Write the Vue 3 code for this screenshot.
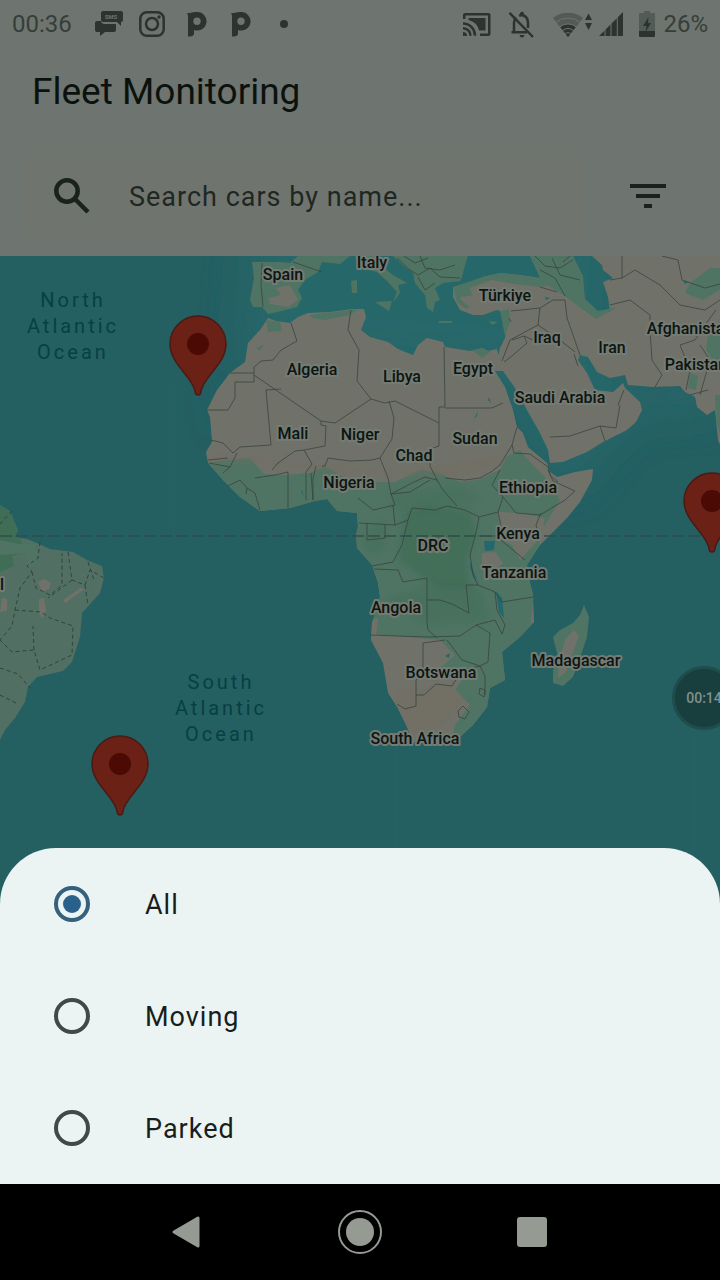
<script setup>
import { ref } from 'vue'

const query = ref('')
const filter = ref('All')
const options = ['All', 'Moving', 'Parked']

const countries = [
  { name: 'Spain', x: 283, y: 280 },
  { name: 'Italy', x: 372, y: 268 },
  { name: 'Türkiye', x: 505, y: 301 },
  { name: 'Iraq', x: 547, y: 343 },
  { name: 'Iran', x: 612, y: 353 },
  { name: 'Afghanistan', x: 690, y: 334 },
  { name: 'Pakistan', x: 696, y: 370 },
  { name: 'Algeria', x: 312, y: 375 },
  { name: 'Libya', x: 402, y: 382 },
  { name: 'Egypt', x: 473, y: 374 },
  { name: 'Saudi Arabia', x: 560, y: 403 },
  { name: 'Mali', x: 293, y: 439 },
  { name: 'Niger', x: 360, y: 440 },
  { name: 'Chad', x: 414, y: 461 },
  { name: 'Sudan', x: 475, y: 444 },
  { name: 'Nigeria', x: 349, y: 488 },
  { name: 'Ethiopia', x: 528, y: 493 },
  { name: 'DRC', x: 433, y: 551 },
  { name: 'Kenya', x: 518, y: 539 },
  { name: 'Tanzania', x: 514, y: 578 },
  { name: 'Angola', x: 396, y: 613 },
  { name: 'Botswana', x: 441, y: 678 },
  { name: 'Madagascar', x: 576, y: 666 },
  { name: 'South Africa', x: 415, y: 744 },
  { name: 'Brazil', x: -16, y: 590 },
]

const oceans = [
  { words: ['North', 'Atlantic', 'Ocean'], x: 73, y: 307 },
  { words: ['South', 'Atlantic', 'Ocean'], x: 221, y: 689 },
]

const pins = [
  { id: 'a', x: 198, y: 344 },
  { id: 'b', x: 712, y: 501 },
  { id: 'c', x: 120, y: 764 },
]
</script>

<template>
  <div class="screen">
    <header class="top">
      <div class="status">
        <span class="clock">00:36</span>
        <svg class="st-icon sms" width="28" height="26" viewBox="0 0 28 26">
          <path d="M8 0h18q2 0 2 2v7q0 2-2 2v4l-4-4H8q-2 0-2-2V2q0-2 2-2z" />
          <path d="M2 10h4q0 3 4 3h11v6q0 2-2 2h-9l-5 4v-4H2q-2 0-2-2v-7q0-2 2-2z" />
          <text x="16" y="8" text-anchor="middle">SMS</text>
        </svg>
        <svg class="st-icon insta" width="26" height="26" viewBox="0 0 26 26">
          <rect x="1.3" y="1.3" width="23.4" height="23.4" rx="6.5" />
          <circle cx="13" cy="13" r="6" />
          <circle class="dot" cx="20" cy="6" r="1.7" />
        </svg>
        <svg v-for="n in 2" :key="n" class="st-icon pee" width="20" height="25" viewBox="0 0 20 25">
          <path fill-rule="evenodd" d="M0 1h3Q6 0 9.500 0A9.300 9.300 0 1 1 7 18v3.500Q7 25 1 24.500V5Q1 2 0 1zM10 5.500a3.700 3.700 0 1 0 0 7.400a3.700 3.700 0 1 0 0-7.400z" />
        </svg>
        <span class="more"></span>
        <span class="grow"></span>
        <svg class="st-icon" width="28" height="23" viewBox="0 0 28 23">
          <path d="M0 6V2q0-2 2-2h23.500q2 0 2 2v19q0 2-2 2H17v-2.500h8V2.500H2.500V6z" />
          <path d="M5.500 5H22.500v12.500H16A14 14 0 0 0 5.500 7z" />
          <path class="arc" d="M0 10.500A12 12 0 0 1 12 22.800M0 15.300A7.400 7.400 0 0 1 7.500 22.800" />
          <path d="M0 19a4 4 0 0 1 4 4H0z" />
        </svg>
        <svg class="st-icon bell" width="26" height="27" viewBox="0 0 26 27">
          <path class="line" d="M6 21V12q0-3.500 2-5.500M11 4.500q8-1.500 9 6.500v6M3.500 21.300H19" />
          <path d="M12 3V2q2-2.500 4 0v2h-4zM11.500 24h5q-.5 2.500-2.500 2.500T11.500 24z" />
          <path class="line" d="M1.500 1.800L25 26" />
        </svg>
        <svg class="st-icon wifi" width="39" height="25" viewBox="0 0 39 25">
          <path class="faint" d="M0 6A24 24 0 0 1 30 6L15 25z" />
          <path d="M7 14.800A13 13 0 0 1 23 14.800L15 25z" />
          <path class="gap" d="M3 10.500A18.500 18.500 0 0 1 27 10.500M6.500 15A13.300 13.300 0 0 1 23.500 15M9.500 18.700A8 8 0 0 1 20.500 18.700M12 22A4 4 0 0 1 18 22" />
          <path d="M32 8l3.500-6.500L39 8zM32 11h7l-3.500 7z" />
        </svg>
        <svg class="st-icon signal" width="24" height="24" viewBox="0 0 24 24">
          <path d="M0 24L5.500 18.500V24zM6.500 24v-6.500L11.500 12.500V24zM12.500 24V11.500L17.800 6.200V24zM18.800 24V5.200L24 0v24z" />
        </svg>
        <svg class="st-icon batt" width="16" height="26" viewBox="0 0 16 26">
          <path class="faint" d="M5 0h6v2h4q1 0 1 1v17H0V3q0-1 1-1h4z" />
          <path d="M0 20h16v5q0 1-1 1H1q-1 0-1-1z" />
          <path d="M9.500 6L4 15h3.500l-1 6L12 12H9z" />
        </svg>
        <span class="percent">26%</span>
      </div>
      <h1>Fleet Monitoring</h1>
      <div class="tools">
        <label class="search">
          <svg width="36" height="36" viewBox="0 0 36 36" aria-hidden="true">
            <circle cx="13" cy="13" r="10.700" />
            <path d="M21 21L34 34" />
          </svg>
          <input v-model="query" type="text" placeholder="Search cars by name..." aria-label="Search cars by name" />
        </label>
        <button class="filter" type="button" aria-label="Filter cars">
          <svg width="36" height="24" viewBox="0 0 36 24">
            <path d="M0 0h36v4H0zM6 10h24v4H6zM14 20h8v4h-8z" />
          </svg>
        </button>
      </div>
    </header>

    <main class="stage">
      <svg class="map" viewBox="0 256 720 928" preserveAspectRatio="xMidYMin slice" role="img" aria-label="Fleet map">
        <defs>
          <filter id="shelf" x="-30%" y="-60%" width="160%" height="220%">
            <feGaussianBlur stdDeviation="22" />
          </filter>
          <filter id="mottle" x="-10%" y="-10%" width="120%" height="120%">
            <feGaussianBlur stdDeviation="3" />
          </filter>
          <clipPath id="africa">
            <path id="africa-shape" d="M268 318L276 321L290 323L298 317L308 313L330 312L352 309L364 309L366 317L361 330L370 337L388 342L398 349L413 355L418 345L427 338L443 342L445 347L470 351L482 348L488 351L497 349L500 360L495 371L505 387L513 410L517 427L523 433L528 447L547 463L550 472L557 477L575 472L593 469L592 480L580 502L567 518L553 532L540 545L527 565L530 583L533 595L534 622L520 637L502 652L505 680L490 688L487 707L473 725L460 737L437 745L413 742L407 727L397 707L388 693L383 663L371 640L372 623L380 597L378 583L372 565L357 548L356 535L358 527L357 513L347 512L337 511L327 499L315 501L290 508L260 511L240 497L223 480L208 463L206 452L212 442L210 417L207 410L217 390L230 373L245 362L248 343L260 330Z" />
          </clipPath>
          <clipPath id="brazil">
            <path id="brazil-shape" d="M0 505L10 511L18 530L15 537L27 539L37 543L50 549L73 552L87 560L102 566L104 578L100 593L82 613L80 637L72 662L63 671L37 677L28 687L25 702L15 718L5 730L0 740Z" />
          </clipPath>
        </defs>

        <rect class="water" x="0" y="256" width="720" height="928" />
        <path class="shallow" filter="url(#shelf)" d="M255 180H620L610 390L720 370V410L640 410L590 460L570 490L540 465L500 380L360 370L240 370L215 450L245 330z" />

        <!-- Europe -->
        <g class="green">
          <path d="M252 262L282 262L290 263L298 256H350L340 264L322 262L318 272L305 280L298 290L302 298L297 307L282 311L268 314L262 307L253 307L250 300L254 278z" />
          <path d="M355 256H380L383 267L393 275L407 283L398 285L400 293L393 302L397 292L388 282L377 272L360 268z" />
          <path d="M375 302L392 301L389 311z" />
          <path d="M351 281L357 280V293H352z" />
          <path d="M393 256L404 266L413 273L415 283L425 295L427 308L433 312L435 302L440 300L435 288L443 283L460 281L462 277L465 265L468 256z" />
          <path d="M439 321h13v2h-13zM489 321l9 1-6 3z" />
        </g>

        <!-- Asia -->
        <path class="sand" d="M453 287L470 283L483 277L500 273L520 275L540 278L538 272L530 256H573L580 275L585 300L598 312H610L608 297L603 282L613 278L603 270L602 265L592 256H720V445L718 440L715 410L707 415L697 407L695 397L685 392L680 386L653 387L628 385L625 375L610 378L597 372L588 357L580 355L578 360L587 373L595 390L613 392L623 383L625 388L640 402L642 410L636 422L627 430L603 442L587 452L563 462L550 463L548 450L540 433L527 410L515 388L503 371L495 371L500 348L505 338L508 318L505 313L497 310L483 315L473 315L460 310L453 297z" />
        <g class="green">
          <path d="M453 287L483 277L500 273L520 275L545 279L552 285L540 287L515 284L492 280L470 288L475 303L466 309L457 302z" />
          <path d="M530 256H573L583 276L585 299L598 311L618 307L596 319L578 306L565 296L550 287L540 278z" />
          <path d="M690 283L710 268H720V290L703 300L685 293zM708 335L720 322V370L706 350zM690 373L698 376L696 390L688 388zM715 395h5v40l-4-15z" />
          <path d="M500 311L509 309L510 322L505 336z" />
        </g>
        <path class="sand" d="M460 297L475 295L490 284L500 298L492 310H474L462 301zM276 288L290 285L298 300L288 307L270 304L268 298L281 295z" />

        <!-- Africa -->
        <use href="#africa-shape" class="sand" />
        <g clip-path="url(#africa)">
          <path class="green" d="M200 464L225 460L250 458L264 474L285 475L310 473L325 466L345 478L375 482L395 482L420 470L436 472L460 482L478 480L500 470L506 457L520 450L530 462L548 480L560 500L545 525L505 512L510 535L540 540L530 630L505 660V690L480 720L450 745L455 725L470 705L455 690L462 680L440 668L455 655L440 640L420 638L372 634L365 600L350 520L260 520z" />
          <path class="forest" filter="url(#mottle)" d="M405 512L430 505L470 512L476 535L466 560L470 590L440 590L420 575L398 560z" opacity=".8" />
          <path class="forest" filter="url(#mottle)" opacity=".4" d="M390 495L460 485L480 500L440 506L395 510zM385 600L430 585L480 590L490 620L430 625zM360 535L385 520V550L370 555z" />
          <g class="green">
            <path d="M266 320L280 322L282 331L268 332zM256 348l8-4-4 7zM310 315L358 309L350 315L325 320L312 318z" />
            <path d="M472 350L484 347L491 351L482 358z" />
          </g>
          <path class="sand" d="M498 512L520 513L545 518L540 538L520 560L512 545L502 540zM482 553L495 552L503 563L492 572L482 565zM372 620L378 618L376 636L371 638z" />
          <path class="tan" filter="url(#mottle)" d="M210 452L260 458L330 465L400 472L440 465L500 455L505 462L470 475L410 476L330 472L260 463L208 462zM395 690L450 685L465 700L445 725L410 735z" />
        </g>
        <path class="green" d="M584 605L589 617L587 637L580 658L573 677L563 686L553 683L553 670L558 657L553 637L560 630L573 623L580 615z" />
        <path class="sand" d="M574 630L579 636L572 655L566 672L558 678L559 663L565 640z" />

        <!-- Brazil -->
        <use href="#brazil-shape" class="scrub" />
        <g clip-path="url(#brazil)">
          <path class="forest" d="M0 505L14 513L18 530L22 545V553L12 556L14 566L0 572z" />
          <path class="green" d="M0 540L20 544L36 543L38 560L28 570L26 553L0 555z" />
          <path class="sand" d="M38 582l6-3 7 4-2 6-7 3zM39 599l5-1 2 12-3 8-4-4zM63 600l9-6 8-6 5 1-12 8-7 6zM2 598l5 1v12l-7 1z" />
        </g>

        <!-- Lakes -->
        <path class="lake" d="M484 541H495L494 550L485 551zM470 562L477 580L474 578L470 568zM496 591L502 598L504 618L499 612z" />
        <path class="lake" d="M302 490l2 6-3-4zM489 397l2 6-3-3zM478 411l-1 5-3 3zM545 297l5 1-4 2zM683 281l6 1-4 2zM445 656l5-3-1 5z" />

        <!-- Country borders -->
        <g class="borders">
          <path d="M291 323L297 341L281 350L273 360L261 361L254 367V382H235V398L228 410H207M230 373H254M254 375L321 421L335 423L371 399L357 381L359 350L348 330L351 310M371 399L385 403L395 401L439 423V407H445L444 347M321 421V425L326 426L325 446L304 450M281 389L266 390L271 445L240 447L233 453L223 443L211 440M389 401L394 418L392 439L380 458L372 460L350 461L328 458L325 466L322 466M439 423V446L430 449V466L437 480L425 477L410 484L391 494M304 450L295 451L278 463L272 470M304 450L312 464L306 472V500M208 460L228 458M209 463L230 467L223 473M230 467L237 453M228 486L240 480L247 488L246 494M247 488L255 493L260 510M255 478L275 475L288 472V508M311 473L313 500M316 466L313 478L313 500M380 458L388 478L391 494L395 505L373 510L358 498" />
          <path d="M445 408H492L503 403M517 427L512 445L514 453L530 454L548 467M512 445L500 465L491 472L480 478L465 480L445 478M500 470L492 485L503 497L516 513L540 515L565 500L575 491L553 481L548 470M548 467L550 475L558 482M391 494L410 492L430 480M437 480L443 490L457 506M503 497L498 512L479 517L465 510L447 506L435 510L412 508L408 520L395 525L359 523M367 523V540L385 538V525M408 520L402 545L393 562L372 566M395 525L393 505M479 517L477 528L474 540L470 555L473 575L478 585L495 592M498 512L502 530L496 536H478M496 536L525 560M541 513L536 525L538 533M495 592L502 602L533 597M495 592L497 610L505 625L502 634L495 620L476 625L460 636L427 637L371 635M374 569L398 570L403 582L427 578V600L440 600L452 604L469 613L466 585L478 585M427 600V622L428 630L437 638M476 625L490 633L488 662L480 666L462 660L447 640M423 643L445 640M423 643V676L416 680V695L424 695L436 684L452 686L462 670L480 666L485 676V695M397 704L405 709L416 706V695M458 711L463 706L469 712L465 719L459 717zM480 688L485 690L484 697L479 694z" />
          <path d="M262 263L261 285L263 307M293 262L322 272M397 258L410 270L418 275L430 268L440 277L460 278M404 256L415 263L428 258M420 256L425 268L440 270L455 265M418 277L425 290L435 283M535 256L545 266L560 268L573 260M540 270L555 278L565 296M552 258L560 275L580 280M511 311L540 308L553 300L565 300L567 318L580 355M509 318L511 322M540 308L538 325L510 340L502 361M512 340L524 336L527 343L512 356L504 362M538 325L560 340L575 352M524 336L535 341M574 354L578 366M610 305L630 300L650 315L650 330L652 360L662 375L655 387M622 256V278L610 280M622 278L635 270L660 285L680 305L705 310L720 300M662 256L678 260L682 280L705 288L720 284M680 345L695 340L705 325L716 310M680 345L690 370L686 390M700 345L710 360L700 395M690 395L708 390M620 405L616 428L600 426L570 436L550 437M600 426L605 441M618 405L624 390M563 262L570 256M540 287L557 292" />
        </g>
        <g class="states">
          <path d="M40 542L38 558L27 566L32 572L20 588L15 610L12 626L0 640M32 572L36 588L50 595L62 585L62 553M68 552L72 580L85 585L90 570L104 578M85 585L88 605M72 580L48 598M15 610L41 612L50 618L73 626L72 655L40 670L34 650L12 652L0 640M34 650L33 626M0 668L18 674L30 688M0 695L18 704M88 562L94 580M12 511L0 524" />
        </g>
        <path class="equator" d="M0 536H720" />
        <path class="tile" d="M173 380V536M396 745V930M694 735V850" />

        <g class="countries">
          <text v-for="c in countries" :key="c.name" :x="c.x" :y="c.y">{{ c.name }}</text>
        </g>
        <g class="oceans">
          <text v-for="o in oceans" :key="o.words[0]" :y="o.y">
            <tspan v-for="(w, i) in o.words" :key="w" :x="o.x" :dy="i ? 26 : 0">{{ w }}</tspan>
          </text>
        </g>
        <g v-for="p in pins" :key="p.id" class="pin" :transform="`translate(${p.x} ${p.y})`">
          <path d="M0 51C-2 51-3 50-3 47C-6 32-28 20-28 0A28 28 0 0 1 28 0C28 20 6 32 3 47C3 50 2 51 0 51z" />
          <circle r="11" />
        </g>
      </svg>

      <div class="recorder">00:14</div>

      <fieldset class="sheet" aria-label="Show cars">
        <label v-for="o in options" :key="o" class="option">
          <input v-model="filter" type="radio" name="status" :value="o" />
          <span>{{ o }}</span>
        </label>
      </fieldset>
    </main>

    <nav class="keys">
      <button type="button" aria-label="Back">
        <svg width="34" height="34" viewBox="0 0 34 34"><path d="M3 17L27 3V31z" /></svg>
      </button>
      <button type="button" aria-label="Home">
        <svg width="44" height="44" viewBox="0 0 44 44">
          <circle class="ring" cx="22" cy="22" r="21" />
          <circle cx="22" cy="22" r="14" />
        </svg>
      </button>
      <button type="button" aria-label="Recent apps">
        <svg width="30" height="30" viewBox="0 0 30 30"><rect width="30" height="30" rx="3" /></svg>
      </button>
    </nav>
  </div>
</template>

<style>
body {
  margin: 0;
  background: #000;
}
</style>

<style scoped>
.screen {
  display: flex;
  flex-direction: column;
  min-height: 100vh;
  overflow: hidden;
  font-family: Roboto, "Liberation Sans", sans-serif;
}
.top {
  background: #6e746f;
}
.status {
  display: flex;
  align-items: center;
  height: 48px;
  padding: 0 12px;
  font-size: 24px;
  color: #363e39;
}
.clock {
  margin-right: 23px;
}
.st-icon {
  flex: none;
  fill: #2c342f;
}
.sms text {
  font-size: 6px;
  font-weight: 700;
  fill: #6e746f;
}
.insta {
  margin: 0 22px 0 16px;
  fill: none;
  stroke: #2c342f;
  stroke-width: 2.5;
}
.insta .dot {
  fill: #2c342f;
  stroke: none;
}
.pee {
  margin-right: 24px;
}
.more {
  width: 8px;
  height: 8px;
  margin-left: 5px;
  border-radius: 50%;
  background: #2c342f;
}
.grow {
  flex: 1;
}
.arc,
.line {
  fill: none;
  stroke: #2c342f;
  stroke-width: 2.5;
}
.bell {
  margin: 0 19px 0 17px;
}
.faint {
  fill: #535b56;
}
.gap {
  fill: none;
  stroke: #6e746f;
  stroke-width: 1;
}
.signal {
  margin: 0 16px 0 7px;
}
.percent {
  margin-left: 8px;
}
h1 {
  margin: 0;
  padding: 20px 32px 0;
  font-size: 37px;
  font-weight: 400;
  line-height: 48px;
  color: #0b120e;
}
.tools {
  display: flex;
  align-items: center;
  padding: 32px 24px 12px;
}
.search {
  display: flex;
  flex: 1;
  align-items: center;
  gap: 39px;
  height: 96px;
  box-sizing: border-box;
  padding-left: 30px;
  border-radius: 12px;
  background: #6f756e;
}
.search svg {
  flex: none;
  fill: none;
  stroke: #1a221e;
  stroke-width: 4.500;
}
.search input {
  flex: 1;
  min-width: 0;
  padding: 2px 0 0;
  border: 0;
  outline: 0;
  background: none;
  font: inherit;
  font-size: 27px;
  letter-spacing: 1px;
  color: #1a221e;
}
.search input::placeholder {
  color: #1f2723;
  opacity: 1;
}
.filter {
  display: grid;
  place-items: center;
  width: 96px;
  height: 96px;
  margin-left: 16px;
  padding: 0;
  border: 0;
  background: none;
}
.filter svg {
  fill: #1a221e;
}
.stage {
  position: relative;
  display: flex;
  flex: 1;
  flex-direction: column;
  justify-content: flex-end;
  min-height: 600px;
  overflow: hidden;
  background: #245f62;
}
.map {
  position: absolute;
  inset: 0;
  width: 100%;
  height: 100%;
}
.water {
  fill: #245f62;
}
.shallow {
  fill: #25686b;
}
.sand {
  fill: #70726a;
}
.tan {
  fill: #746d61;
  opacity: 0.5;
}
.green {
  fill: #4f7464;
}
.scrub {
  fill: #516f62;
}
.forest {
  fill: #3f6d56;
}
.lake {
  fill: #24686f;
}
.borders {
  fill: none;
  stroke: #38443e;
  stroke-width: 0.8;
}
.states {
  fill: none;
  stroke: #32433d;
  stroke-width: 1;
  stroke-dasharray: 4 3;
}
.equator {
  fill: none;
  stroke: #334c4b;
  stroke-width: 1.500;
  stroke-dasharray: 12 4;
}
.tile {
  fill: none;
  stroke: #2a6066;
  stroke-width: 1;
}
.countries text {
  font-size: 16px;
  font-weight: 500;
  text-anchor: middle;
  fill: #0d1512;
  stroke: #747b73;
  stroke-width: 4;
  stroke-linejoin: round;
  paint-order: stroke;
}
.oceans text {
  font-size: 20px;
  letter-spacing: 3px;
  text-anchor: middle;
  fill: #083f43;
}
.pin path {
  fill: #6c2116;
  stroke: #4b1a14;
  stroke-width: 1.500;
}
.pin circle {
  fill: #4b0a04;
}
.recorder {
  position: absolute;
  top: 410px;
  right: -16px;
  box-sizing: border-box;
  width: 64px;
  height: 64px;
  border: 3px solid #1e4d4c;
  border-radius: 50%;
  background: #183f3e;
  font-size: 14px;
  font-weight: 500;
  line-height: 58px;
  text-align: center;
  white-space: nowrap;
  color: #80918e;
}
.sheet {
  position: relative;
  margin: 0;
  padding: 0;
  border: 0;
  border-radius: 56px 56px 0 0;
  background: #ebf4f3;
}
.option {
  display: flex;
  align-items: center;
  gap: 55px;
  height: 112px;
  padding-left: 54px;
  font-size: 27px;
  line-height: 36px;
  letter-spacing: 1px;
  color: #171e1c;
}
.option span {
  padding-top: 2px;
}
.option input {
  appearance: none;
  display: grid;
  place-items: center;
  flex: none;
  box-sizing: border-box;
  width: 36px;
  height: 36px;
  margin: 0;
  border: 4px solid #404947;
  border-radius: 50%;
}
.option input:checked {
  border-color: #35617f;
}
.option input:checked::before {
  content: "";
  width: 18px;
  height: 18px;
  border-radius: 50%;
  background: #2a618b;
}
.keys {
  display: grid;
  grid-template-columns: repeat(3, 172px);
  justify-content: center;
  height: 96px;
  background: #000;
}
.keys button {
  display: grid;
  place-items: center;
  padding: 0;
  border: 0;
  background: none;
}
.keys svg {
  fill: #959a93;
}
.keys path {
  stroke: #959a93;
  stroke-width: 3;
  stroke-linejoin: round;
}
.keys .ring {
  fill: none;
  stroke: #959a93;
  stroke-width: 2;
}
</style>
